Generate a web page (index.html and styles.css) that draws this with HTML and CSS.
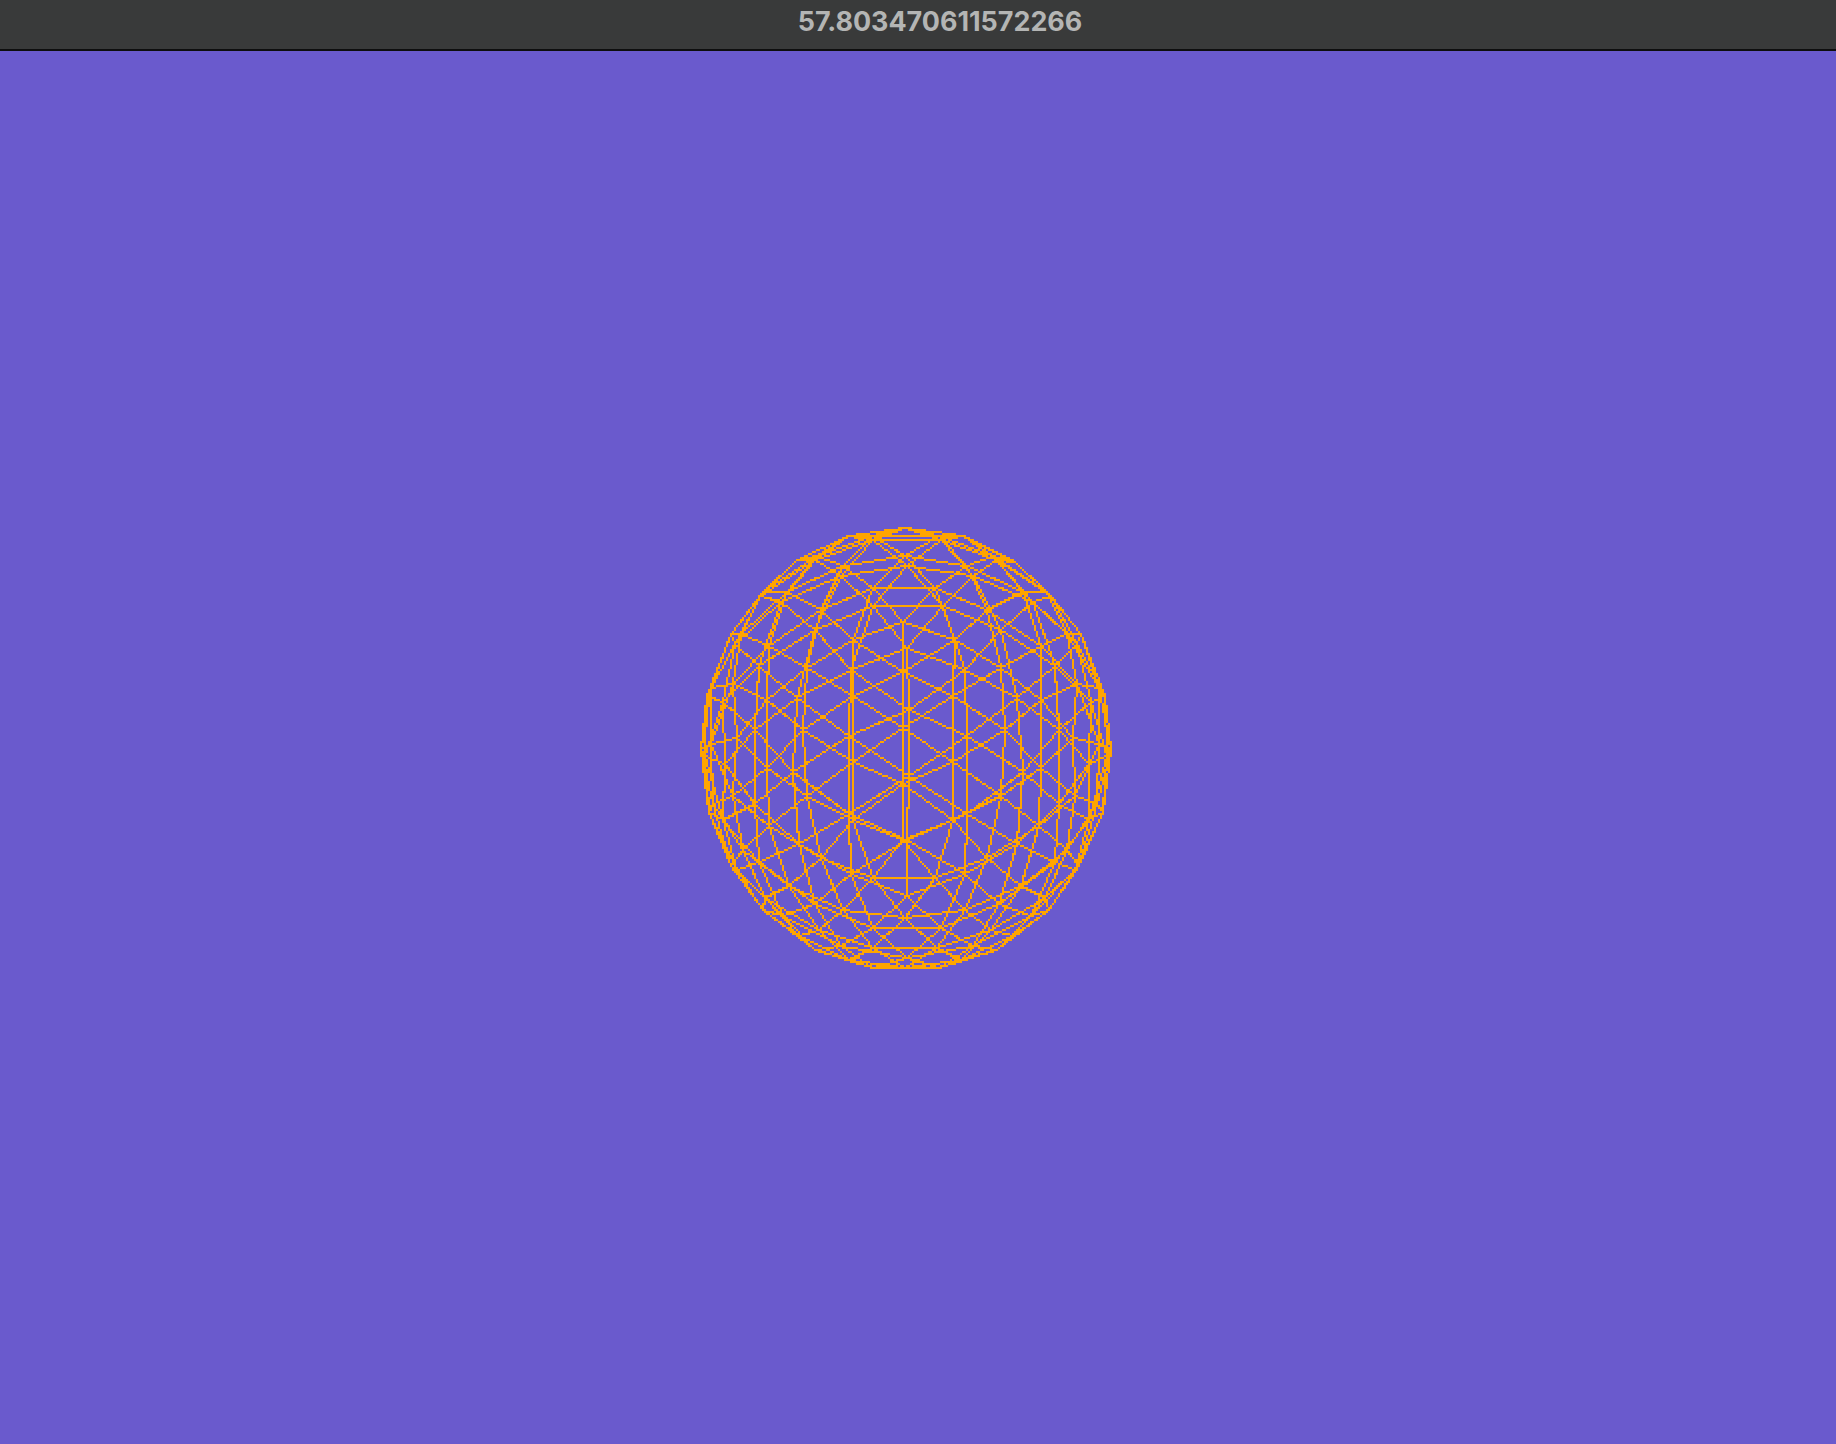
FILE: index.html
```html
<!DOCTYPE html>
<html lang="en">
<head>
<meta charset="utf-8">
<title>57.803470611572266</title>
<link rel="stylesheet" href="styles.css">
</head>
<body>
<div class="window">
  <header class="titlebar"><span class="title">57.803470611572266</span></header>
  <canvas class="stage" id="stage" width="918" height="696"></canvas>
</div>
<script src="sphere.js"></script>
</body>
</html>
```
FILE: styles.css
```css
* { box-sizing: border-box; }
html, body { margin: 0; height: 100%; overflow: hidden; background: #6a5acd; }
.window { display: flex; flex-direction: column; height: 100vh; }
.titlebar {
  flex: 0 0 51px;
  display: flex;
  align-items: center;
  justify-content: center;
  padding: 0 0 6px 0;
  background: #393a3a;
  border-bottom: 2px solid #0e0e0e;
}
.title {
  font: 700 26.9px/1 Inter, "Liberation Sans", sans-serif;
  color: #b4b5b4;
  margin-left: 44px;
}
.stage { flex: none; display: block; width: 1836px; height: 1392px; image-rendering: pixelated; }
```
FILE: sphere.js
```js
(function () {
  var DEPTH = 2, RX = 6.2, RY = 0.65, D = 13;
  var CX = 452.3, CY = 349, SX = 102.7, SY = 111;
  var t = (1 + Math.sqrt(5)) / 2;
  var V = [[-1,t,0],[1,t,0],[-1,-t,0],[1,-t,0],[0,-1,t],[0,1,t],[0,-1,-t],[0,1,-t],[t,0,-1],[t,0,1],[-t,0,-1],[-t,0,1]];
  var F = [[0,11,5],[0,5,1],[0,1,7],[0,7,10],[0,10,11],[1,5,9],[5,11,4],[11,10,2],[10,7,6],[7,1,8],
           [3,9,4],[3,4,2],[3,2,6],[3,6,8],[3,8,9],[4,9,5],[2,4,11],[6,2,10],[8,6,7],[9,8,1]];
  function unit(p) { var l = Math.hypot(p[0], p[1], p[2]); return [p[0]/l, p[1]/l, p[2]/l]; }
  function mid(a, b) { return unit([a[0]+b[0], a[1]+b[1], a[2]+b[2]]); }
  var ax = RX * Math.PI / 180, ay = RY * Math.PI / 180;
  function project(p) {
    var x = p[0], y = p[1], z = p[2];
    var y1 = y*Math.cos(ax) - z*Math.sin(ax), z1 = y*Math.sin(ax) + z*Math.cos(ax);
    var x2 = x*Math.cos(ay) + z1*Math.sin(ay), z2 = -x*Math.sin(ay) + z1*Math.cos(ay);
    var w = D / (D - z2);
    return [Math.round(CX + SX*x2*w), Math.round(CY - SY*y1*w)];
  }
  var ctx = document.getElementById('stage').getContext('2d');
  ctx.fillStyle = '#6a5acd';
  ctx.fillRect(0, 0, 918, 696);
  ctx.fillStyle = '#ffa500';
  function line(a, b) {
    a = project(a); b = project(b);
    var x = a[0], y = a[1], dx = Math.abs(b[0]-x), dy = -Math.abs(b[1]-y);
    var sx = x < b[0] ? 1 : -1, sy = y < b[1] ? 1 : -1, e = dx + dy;
    for (;;) {
      ctx.fillRect(x, y, 1, 1);
      if (x === b[0] && y === b[1]) break;
      var e2 = 2*e;
      if (e2 >= dy) { e += dy; x += sx; }
      if (e2 <= dx) { e += dx; y += sy; }
    }
  }
  function tri(a, b, c, level) {
    if (level === 0) { line(a, b); line(b, c); line(c, a); return; }
    var ab = mid(a, b), bc = mid(b, c), ca = mid(c, a);
    tri(a, ab, ca, level-1); tri(b, bc, ab, level-1); tri(c, ca, bc, level-1); tri(ab, bc, ca, level-1);
  }
  F.forEach(function (f) { tri(unit(V[f[0]]), unit(V[f[1]]), unit(V[f[2]]), DEPTH); });
})();
```
